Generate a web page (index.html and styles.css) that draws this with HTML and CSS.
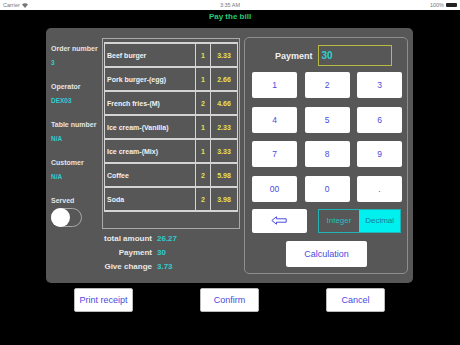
FILE: index.html
```html
<!DOCTYPE html>
<html lang="en">
  <head>
    <meta charset="UTF-8" />
    <meta name="viewport" content="width=device-width, initial-scale=1.0" />
    <title>Pay the bill</title>
    <link rel="stylesheet" href="styles.css">
  </head>
  <body>
    <div class="statusBar">
      <div class="carrier">Carrier
        <svg width="6" height="5" viewBox="0 0 6 5"><path d="M0 1.5 A4.2 4.2 0 0 1 6 1.5 L3 5 Z" fill="#777" /></svg>
      </div>
      <div>3:35 AM</div>
      <div class="battery">100% <span class="batteryIcon"></span></div>
    </div>
    <div class="title">Pay the bill</div>

    <main class="panel">
      <div class="leftSide">
        <div class="orderArea">
          <div class="info">
            <div class="infoLabel">Order number</div>
            <div class="infoValue">3</div>
            <div class="infoLabel">Operator</div>
            <div class="infoValue">DEX03</div>
            <div class="infoLabel">Table number</div>
            <div class="infoValue">N/A</div>
            <div class="infoLabel">Customer</div>
            <div class="infoValue">N/A</div>
            <div class="infoLabel">Served</div>
            <div class="toggle"><span class="knob"></span></div>
          </div>
          <div class="tableBox">
            <table class="items">
              <tr><td class="name">Beef burger</td><td class="num">1</td><td class="num">3.33</td></tr>
              <tr><td class="name">Pork burger-(egg)</td><td class="num">1</td><td class="num">2.66</td></tr>
              <tr><td class="name">French fries-(M)</td><td class="num">2</td><td class="num">4.66</td></tr>
              <tr><td class="name">Ice cream-(Vanilla)</td><td class="num">1</td><td class="num">2.33</td></tr>
              <tr><td class="name">Ice cream-(Mix)</td><td class="num">1</td><td class="num">3.33</td></tr>
              <tr><td class="name">Coffee</td><td class="num">2</td><td class="num">5.98</td></tr>
              <tr><td class="name">Soda</td><td class="num">2</td><td class="num">3.98</td></tr>
            </table>
          </div>
        </div>
        <div class="totals">
          <div class="totalLabel">total amount</div><div class="totalValue">26.27</div>
          <div class="totalLabel">Payment</div><div class="totalValue">30</div>
          <div class="totalLabel">Give change</div><div class="totalValue">3.73</div>
        </div>
      </div>

      <div class="pad">
        <div class="paymentRow">
          <span class="paymentLabel">Payment</span>
          <div class="paymentInput">30</div>
        </div>
        <div class="keys">
          <div class="key">1</div><div class="key">2</div><div class="key">3</div>
          <div class="key">4</div><div class="key">5</div><div class="key">6</div>
          <div class="key">7</div><div class="key">8</div><div class="key">9</div>
          <div class="key">00</div><div class="key">0</div><div class="key">.</div>
        </div>
        <div class="modeRow">
          <div class="key backKey">
            <svg width="16" height="9" viewBox="0 0 16 9">
              <path d="M0.8 4.5 L5.5 0.8 L5.5 2.8 L15.2 2.8 L15.2 6.2 L5.5 6.2 L5.5 8.2 Z" fill="none" stroke="#4a4ae0" stroke-width="1" stroke-linejoin="round" />
            </svg>
          </div>
          <div class="segment">
            <div class="segItem">Integer</div>
            <div class="segItem active">Decimal</div>
          </div>
        </div>
        <div class="calcRow">
          <div class="key calcKey">Calculation</div>
        </div>
      </div>
    </main>

    <footer class="actions">
      <div class="actionButton">Print receipt</div>
      <div class="actionButton">Confirm</div>
      <div class="actionButton">Cancel</div>
    </footer>
  </body>
</html>
```

FILE: styles.css
```css
body,
html {
  margin: 0;
  padding: 0;
  width: 460px;
  height: 345px;
  background-color: #000;
  font-family: 'Liberation Sans', arial, sans-serif;
  overflow: hidden;
}

.statusBar {
  display: flex;
  justify-content: space-between;
  align-items: center;
  height: 10px;
  padding: 0 3px;
  background-color: #fff;
  color: #777;
  font-size: 5.5px;
  box-sizing: border-box;
}

.carrier,
.battery {
  display: flex;
  align-items: center;
  gap: 2px;
  width: 60px;
}

.battery {
  justify-content: flex-end;
}

.batteryIcon {
  display: inline-block;
  width: 11px;
  height: 4px;
  background-color: #222;
  border-radius: 1px;
}

.title {
  height: 18px;
  line-height: 13px;
  text-align: center;
  color: #22cc77;
  font-weight: 700;
  font-size: 8px;
}

.panel {
  display: flex;
  gap: 4px;
  width: 367px;
  height: 255px;
  margin-left: 46px;
  padding: 9px 5px 0 5px;
  box-sizing: border-box;
  background-color: #575757;
  border-radius: 5px;
}

.leftSide {
  display: flex;
  flex-direction: column;
  width: 189px;
}

.orderArea {
  display: flex;
  margin-top: 1px;
}

.info {
  display: flex;
  flex-direction: column;
  width: 51px;
  padding-top: 5px;
}

.infoLabel {
  color: #e4e4e4;
  font-size: 7px;
  font-weight: 700;
  line-height: 12px;
  white-space: nowrap;
}

.infoValue {
  color: #2dcfcf;
  font-size: 6.5px;
  font-weight: 700;
  line-height: 12px;
  margin-top: 2px;
  margin-bottom: 12px;
}

.toggle {
  position: relative;
  width: 31px;
  height: 19px;
  margin-top: 1px;
  border: 1px solid #a8a8a8;
  border-radius: 10px;
  box-sizing: border-box;
}

.knob {
  position: absolute;
  left: -1px;
  top: -1px;
  width: 19px;
  height: 19px;
  background-color: #fff;
  border-radius: 50%;
}

.tableBox {
  width: 138px;
  height: 191px;
  border: 1px solid #a9a9a9;
  box-sizing: border-box;
  padding: 3px 1px 0 1px;
}

.items {
  width: 134px;
  border-collapse: collapse;
  table-layout: fixed;
}

.items td {
  height: 22px;
  border: 1px solid #d4d4d4;
  border-top-width: 2px;
  border-bottom-width: 2px;
  font-size: 7px;
  font-weight: 700;
  padding: 0;
}

.items .name {
  width: 88px;
  padding-left: 2px;
  color: #f2f2f2;
  white-space: nowrap;
}

.items .num {
  color: #e2e24e;
  text-align: center;
}

.items td:nth-child(2) {
  width: 14px;
}

.totals {
  display: grid;
  grid-template-columns: 101px auto;
  column-gap: 5px;
  margin-top: 3px;
  font-size: 8px;
  font-weight: 700;
  line-height: 14px;
}

.totalLabel {
  color: #e8e8e8;
  text-align: right;
}

.totalValue {
  color: #2dcfcf;
}

.pad {
  width: 164px;
  height: 237px;
  border: 1px solid #8e8e8e;
  border-radius: 5px;
  box-sizing: border-box;
  padding: 7px 6px 0 7px;
}

.paymentRow {
  display: flex;
  align-items: center;
  height: 21px;
  padding-left: 23px;
  gap: 5px;
}

.paymentLabel {
  color: #f0f0f0;
  font-size: 9px;
  font-weight: 700;
}

.paymentInput {
  width: 74px;
  height: 21px;
  line-height: 19px;
  padding-left: 3px;
  border: 1px solid #b8bb42;
  box-sizing: border-box;
  color: #2dcfcf;
  font-size: 10px;
  font-weight: 700;
}

.keys {
  display: grid;
  grid-template-columns: repeat(3, 45px);
  grid-auto-rows: 26px;
  column-gap: 7.5px;
  row-gap: 8.5px;
  margin-top: 6px;
}

.key {
  display: flex;
  justify-content: center;
  align-items: center;
  background-color: #fff;
  border-radius: 2px;
  color: #4a4ae0;
  font-size: 8.5px;
}

.modeRow {
  display: flex;
  gap: 11px;
  margin-top: 7px;
  height: 24px;
}

.backKey {
  width: 55px;
}

.segment {
  display: flex;
  width: 84px;
  border: 1px solid #1fb3b3;
  box-sizing: border-box;
}

.segItem {
  flex: 1;
  display: flex;
  justify-content: center;
  align-items: center;
  color: #24bfbf;
  font-size: 8px;
}

.segItem.active {
  background-color: #00f0f0;
  color: #1a7f8f;
}

.calcRow {
  display: flex;
  justify-content: center;
  margin-top: 8px;
}

.calcKey {
  width: 81px;
  height: 26px;
  font-size: 9px;
}

.actions {
  display: flex;
  gap: 67px;
  margin-top: 5px;
  padding-left: 74px;
}

.actionButton {
  display: flex;
  justify-content: center;
  align-items: center;
  width: 59px;
  height: 24px;
  background-color: #fff;
  border: 1px solid #bbb;
  border-radius: 2px;
  box-sizing: border-box;
  color: #4a4ae0;
  font-size: 9px;
}
```
